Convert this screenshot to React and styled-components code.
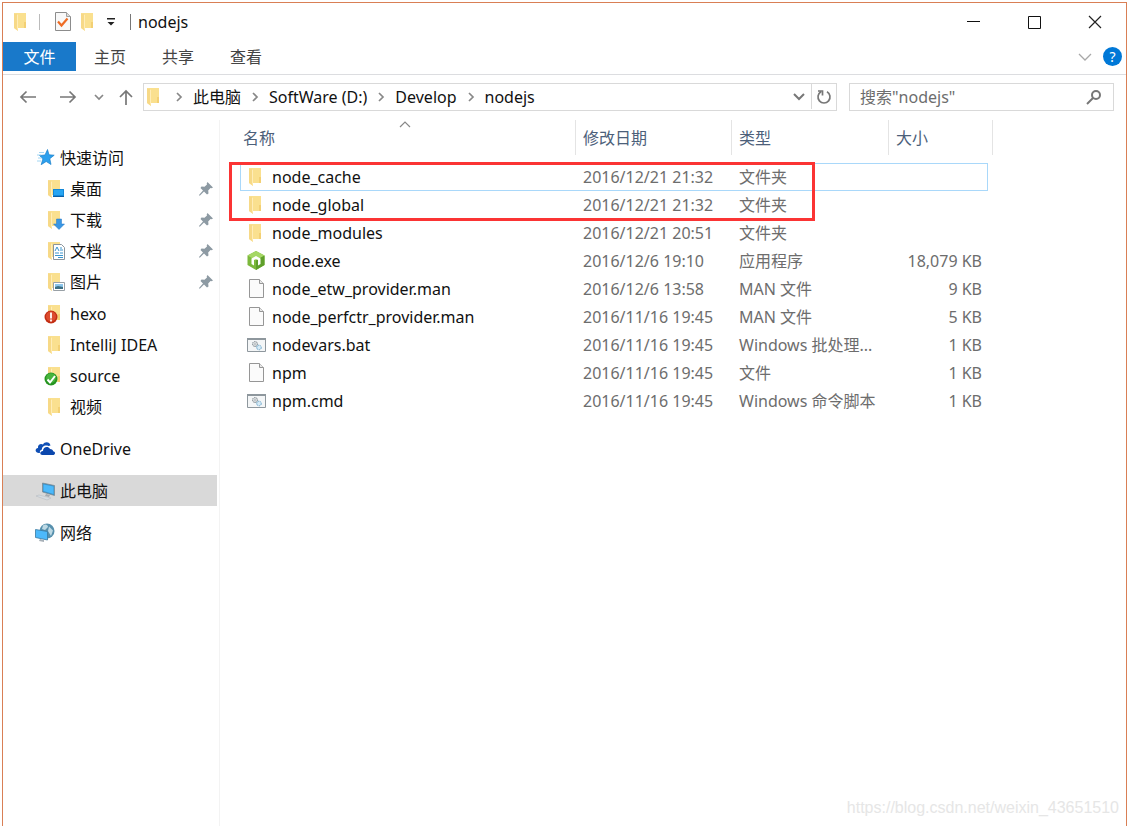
import React from 'react';
import styled, { createGlobalStyle } from 'styled-components';

const pinned = [
  { name: '桌面', icon: 'desktop' },
  { name: '下载', icon: 'download' },
  { name: '文档', icon: 'document' },
  { name: '图片', icon: 'picture' },
];

const folders = [
  { name: 'hexo', icon: 'error' },
  { name: 'IntelliJ IDEA', icon: 'folder' },
  { name: 'source', icon: 'synced' },
  { name: '视频', icon: 'folder' },
];

const path = ['此电脑', 'SoftWare (D:)', 'Develop', 'nodejs'];

const files = [
  { name: 'node_cache', icon: 'folder', date: '2016/12/21 21:32', type: '文件夹', size: '', focused: true },
  { name: 'node_global', icon: 'folder', date: '2016/12/21 21:32', type: '文件夹', size: '' },
  { name: 'node_modules', icon: 'folder', date: '2016/12/21 20:51', type: '文件夹', size: '' },
  { name: 'node.exe', icon: 'node', date: '2016/12/6 19:10', type: '应用程序', size: '18,079 KB' },
  { name: 'node_etw_provider.man', icon: 'file', date: '2016/12/6 13:58', type: 'MAN 文件', size: '9 KB' },
  { name: 'node_perfctr_provider.man', icon: 'file', date: '2016/11/16 19:45', type: 'MAN 文件', size: '5 KB' },
  { name: 'nodevars.bat', icon: 'script', date: '2016/11/16 19:45', type: 'Windows 批处理...', size: '1 KB' },
  { name: 'npm', icon: 'file', date: '2016/11/16 19:45', type: '文件', size: '1 KB' },
  { name: 'npm.cmd', icon: 'script', date: '2016/11/16 19:45', type: 'Windows 命令脚本', size: '1 KB' },
];

const FolderShape = () => (
  <>
    <path d="M3 1h11v15H5z" fill="#fae08f" />
    <path d="M12 10h2v6h-2z" fill="#f3d074" />
    <path d="M2 1l4 2v16l-4-3z" fill="#ffedb8" />
    <path d="M2 1l3 1v14l1 3-4-3z" fill="#f7d987" />
  </>
);

const shapes = {
  folder: <FolderShape />,
  desktop: (
    <>
      <FolderShape />
      <path d="M7 10h11v8H7z" fill="#1388d8" />
      <path d="M8 11h9v5H8z" fill="#27a5f2" />
      <path d="M7 17h11v1H7z" fill="#0b5fa5" />
    </>
  ),
  download: (
    <>
      <FolderShape />
      <path d="M10.500 9h5v5h3L13 19.500l-5.500-5.500h3z" fill="#3a97e4" stroke="#2377c4" strokeWidth=".5" />
    </>
  ),
  document: (
    <>
      <FolderShape />
      <path d="M7.500 3.500h8l3 3v12h-11z" fill="#fff" stroke="#8b959c" />
      <path d="M9 10l2-4 2 4M14 7h2M14 9h3M9 12h4M14 12h3M9 14.500h8M12 16.500h5" fill="none" stroke="#3c96cf" />
    </>
  ),
  picture: (
    <>
      <FolderShape />
      <path d="M7.500 10.500h11v8h-11z" fill="#fff" stroke="#98a0a6" />
      <path d="M9 12h8v3H9z" fill="#8cc6ec" />
      <path d="M9 15l3-1 5 1v2H9z" fill="#3c6f84" />
    </>
  ),
  error: (
    <>
      <FolderShape />
      <circle cx="5" cy="13" r="6.500" fill="#c22d13" />
      <circle cx="5" cy="12.500" r="5" fill="#dc4c2e" />
      <path d="M5 8.500v6M5 15.500v2" stroke="#fff" strokeWidth="1.800" />
    </>
  ),
  synced: (
    <>
      <FolderShape />
      <circle cx="5" cy="13" r="6.500" fill="#259420" />
      <circle cx="5" cy="12" r="4.800" fill="#48b43d" />
      <path d="M1.500 13.500l2.500 3 5-6.500" fill="none" stroke="#fff" strokeWidth="2" />
    </>
  ),
  star: (
    <>
      <path d="M11.500 1.500l1.500 5.300 5.200.4-4.400 3.500 1.200 5.800-4.800-3-5 3.200 1.700-5.900L3.500 7.500l5.500-.5z" fill="#2ba0ee" stroke="#1c7fc9" strokeWidth=".7" />
      <path d="M3 4.500h5M1 7h4M2 10h4M1 13h4" stroke="#8ccbf0" strokeWidth=".8" />
    </>
  ),
  cloud: (
    <>
      <path d="M3 14C-1 14-1.500 9.500 2 9 1.500 5.500 5 4 7 5.500c1.500-3.500 7-3 7.500 1l-2 .5C9 5.500 5.500 7.500 6 10.500c-2 .5-2.500 2-2 3.500z" fill="#0f4fb5" />
      <path d="M6.500 16c-3 0-3-4 .5-4 0-4 5-5.500 7-2 2 0 3 1 3 2.200 3 .3 2.500 3.800-.2 3.800z" fill="#0b47ad" />
    </>
  ),
  computer: (
    <>
      <path d="M6.500 2l12 2.500v10L6.500 11z" fill="#3d92c9" stroke="#78858d" strokeWidth=".7" />
      <path d="M7.500 3.500l10 2v7.500l-10-3z" fill="#4cb9fb" />
      <path d="M10 13l4 1-1 2-4-1z" fill="#a4abb0" />
      <path d="M0 15l3-1 12 3-4 2z" fill="#d7dde2" stroke="#b0b7bd" strokeWidth=".5" />
    </>
  ),
  network: (
    <>
      <circle cx="11" cy="8" r="7.500" fill="#5790ad" />
      <path d="M7 2.500c2-2 5-1 5 1.500L9 7 6 6zM13 3.500l4 4-2 5.500-3-5z" fill="#bdd9e4" />
      <path d="M-.5 6.500l12 2v8.500l-12-2.500z" fill="#4cb9fb" stroke="#38789f" strokeWidth=".8" />
      <path d="M4 16l4 1v2L3 18z" fill="#a7b0b7" />
    </>
  ),
  node: (
    <>
      <path d="M9 0l8.500 4.500v9.500L9 19 .5 14V4.500z" fill="#7cb83c" />
      <path d="M9 0l8.500 4.500L9 9.500.5 4.500z" fill="#a5d765" />
      <path d="M9 9.500l8.500-5v9.500L9 19z" fill="#5f9f2b" />
      <path d="M4.500 13V7.500L9 5l4.500 2.500V13L11 14.500V9L9 8 7 9v5.500z" fill="#fff" />
    </>
  ),
  file: (
    <>
      <path d="M2.500 .5h10l4 4v14h-14z" fill="#fbfbfb" stroke="#969696" />
      <path d="M12.500 .5v4h4" fill="#e8e8e8" stroke="#969696" />
    </>
  ),
  script: (
    <>
      <path d="M.5 3.500h18v13H.5z" fill="#f4f6f7" stroke="#8e979d" />
      <path d="M0 3h19v2H0z" fill="#8e979d" />
      <circle cx="8" cy="9" r="2.500" fill="#e2e6e8" stroke="#7f888e" strokeDasharray="1.500 .6" />
      <circle cx="8" cy="9" r="1" fill="#fff" stroke="#7f888e" strokeWidth=".5" />
      <circle cx="12" cy="12.500" r="2.300" fill="#d5eaf6" stroke="#6ba6ca" strokeDasharray="1.500 .6" />
    </>
  ),
  checked: (
    <>
      <path d="M2.500 .5h11l4 4v14h-15z" fill="#f8f8f8" stroke="#8c8c8c" />
      <path d="M13.500 .5v4h4" fill="#ddd" stroke="#a0a0a0" />
      <path d="M5 9.500l3.500 4 6-7" fill="none" stroke="#ee6b24" strokeWidth="2.200" />
    </>
  ),
};

const Icon = ({ name }) => (
  <IconBox viewBox="0 0 20 20" aria-hidden="true">{shapes[name]}</IconBox>
);

// Line drawings share one stroke style
const Line = ({ d, w = 16, h = 16, color = '#777', weight = 1.7 }) => (
  <svg width={w} height={h} viewBox={`0 0 ${w} ${h}`} fill="none" stroke={color} strokeWidth={weight} aria-hidden="true">
    <path d={d} />
  </svg>
);

const Pin = () => (
  <svg width="14" height="14" viewBox="0 0 14 14" aria-hidden="true">
    <path d="M8.500 0L14 5.500l-1.500.8-1-.3-2.300 2.500.3 3-1.500 1L5 9.500 1 13.500H0V13l4-4.500L1.500 6l1-1.500 3 .3L8 2.500l-.3-1z" fill="#8d9aa3" />
  </svg>
);

function TitleBar() {
  return (
    <Title>
      <Icon name="folder" />
      <Divider />
      <QuickButton aria-label="属性"><Icon name="checked" /></QuickButton>
      <QuickButton aria-label="新建文件夹"><Icon name="folder" /></QuickButton>
      <MenuButton aria-label="自定义快速访问工具栏">
        <svg width="10" height="8" viewBox="0 0 10 8"><path d="M1 0h8v1.500H1zM1.500 4h7L5 7.500z" fill="#222" /></svg>
      </MenuButton>
      <Divider $dark />
      <TitleText>nodejs</TitleText>
      <WindowButton aria-label="最小化"><Line d="M1 7.500h13" color="#111" weight={1} /></WindowButton>
      <WindowButton aria-label="最大化"><Line d="M1.500 2.500h12v12h-12z" color="#111" weight={1} /></WindowButton>
      <WindowButton aria-label="关闭"><Line d="M1 2l12 12M13 2L1 14" color="#222" weight={1.2} /></WindowButton>
    </Title>
  );
}

function Ribbon() {
  return (
    <RibbonBar>
      <FileTab>文件</FileTab>
      <Tab>主页</Tab>
      <Tab>共享</Tab>
      <Tab>查看</Tab>
      <RibbonEnd>
        <PlainButton aria-label="展开功能区"><Line d="M2 5l6 6 6-6" color="#a8a8a8" weight={1.3} /></PlainButton>
        <Help aria-label="帮助">?</Help>
      </RibbonEnd>
    </RibbonBar>
  );
}

function AddressBar() {
  return (
    <Navigation>
      <NavButton $width={36} aria-label="返回"><Line d="M17 8H2M7.500 2.500L2 8l5.500 5.500" w={18} /></NavButton>
      <NavButton $width={44} aria-label="前进"><Line d="M1 8h15M10.500 2.500L16 8l-5.500 5.500" w={18} /></NavButton>
      <NavButton $width={18} aria-label="最近浏览的位置"><Line d="M1 3l4 4 4-4" w={10} h={10} color="#888" /></NavButton>
      <NavButton $width={35} aria-label="向上"><Line d="M8 16V2M2 8l6-6 6 6" /></NavButton>
      <Address>
        <Icon name="folder" />
        {path.map((part) => (
          <React.Fragment key={part}>
            <Arrow><Line d="M2 1l4 4-4 4" w={8} h={10} color="#888" /></Arrow>
            <Crumb href="#">{part}</Crumb>
          </React.Fragment>
        ))}
        <AddressEnd>
          <NavButton $width={24} aria-label="以前的位置"><Line d="M1 3l5 5 5-5" w={12} h={12} weight={2} /></NavButton>
          <Refresh aria-label="刷新">
            <Line d="M11 2.800a6 6 0 1 1-6 0M2 2h4.500v4.500" />
          </Refresh>
        </AddressEnd>
      </Address>
      <Search>
        <SearchInput type="search" aria-label="搜索" placeholder={'搜索"nodejs"'} />
        <PlainButton aria-label="开始搜索">
          <svg width="16" height="16" viewBox="0 0 16 16" fill="none" stroke="#777" strokeWidth="2" aria-hidden="true">
            <circle cx="10" cy="6" r="4" />
            <path d="M7 9l-6 6" />
          </svg>
        </PlainButton>
      </Search>
    </Navigation>
  );
}

function Sidebar() {
  return (
    <Side>
      <Group>
        <Place href="#"><Icon name="star" />快速访问</Place>
        {pinned.map((item) => (
          <Place href="#" key={item.name} $nested>
            <Icon name={item.icon} />
            <PlaceName>{item.name}</PlaceName>
            <Pin />
          </Place>
        ))}
        <Subgroup>
          {folders.map((item) => (
            <Place href="#" key={item.name} $nested><Icon name={item.icon} />{item.name}</Place>
          ))}
        </Subgroup>
      </Group>
      <Place href="#"><Icon name="cloud" />OneDrive</Place>
      <Place href="#" $active><Icon name="computer" />此电脑</Place>
      <Place href="#"><Icon name="network" />网络</Place>
    </Side>
  );
}

function FileList() {
  return (
    <ListArea>
      <Table>
        <colgroup>
          <Col $width={341} />
          <Col $width={156} />
          <Col $width={157} />
          <Col $width={104} />
        </colgroup>
        <thead>
          <tr>
            <Th aria-sort="ascending">
              <HeadButton $first>名称<SortMark><Line d="M1 6l5-5 5 5" w={12} h={7} color="#888" weight={1.2} /></SortMark></HeadButton>
            </Th>
            <Th><HeadButton>修改日期</HeadButton></Th>
            <Th><HeadButton>类型</HeadButton></Th>
            <Th><HeadButton>大小</HeadButton></Th>
          </tr>
        </thead>
        <tbody>
          {files.map((file) => (
            <Row key={file.name} $focused={file.focused}>
              <NameCell><FileName><Icon name={file.icon} />{file.name}</FileName></NameCell>
              <Cell>{file.date}</Cell>
              <Cell>{file.type}</Cell>
              <SizeCell>{file.size}</SizeCell>
            </Row>
          ))}
        </tbody>
      </Table>
      <Highlight />
    </ListArea>
  );
}

function App() {
  return (
    <>
      <GlobalStyle />
      <Page>
        <Window>
          <TitleBar />
          <Ribbon />
          <AddressBar />
          <Content>
            <Sidebar />
            <FileList />
          </Content>
          <Watermark>https://blog.csdn.net/weixin_43651510</Watermark>
        </Window>
      </Page>
    </>
  );
}

export default App;

const GlobalStyle = createGlobalStyle`
  * {
    box-sizing: border-box;
  }
  body {
    margin: 0;
    background: #fff;
    color: #111;
    font: 16px/24px "Noto Sans", "Noto Sans CJK SC", sans-serif;
  }
  button, input {
    margin: 0;
    padding: 0;
    border: 0;
    background: none;
    color: inherit;
    font: inherit;
  }
  a {
    color: inherit;
    text-decoration: none;
  }
  svg {
    display: block;
    flex: none;
  }
`;

const Page = styled.div`
  display: flex;
  min-height: 100vh;
  padding: 2px 1px 0 2px;
`;

const Window = styled.div`
  position: relative;
  flex: 1;
  display: flex;
  flex-direction: column;
  border: 1px solid #d97f55;
  border-bottom: 0;
`;

const IconBox = styled.svg`
  width: 20px;
  height: 20px;
  overflow: visible;
`;

const Title = styled.header`
  display: flex;
  align-items: center;
  height: 39px;
  padding: 0 0 2px 9px;
`;

const Divider = styled.span`
  width: 1px;
  height: 16px;
  margin: 0 7px;
  background: ${({ $dark }) => ($dark ? '#777' : '#bbb')};
`;

const PlainButton = styled.button`
  display: flex;
  align-items: center;
  justify-content: center;
`;

const QuickButton = styled(PlainButton)`
  width: 26px;
  padding-left: 6px;
`;

const MenuButton = styled(PlainButton)`
  width: 24px;
`;

const TitleText = styled.span`
  flex: 1;
`;

const WindowButton = styled(PlainButton)`
  width: 61px;
  height: 100%;
`;

const RibbonBar = styled.div`
  display: flex;
  height: 33px;
  padding-bottom: 3px;
  border-bottom: 1px solid #dcdde0;
`;

const Tab = styled.button`
  width: 68px;
  color: #444;
`;

const FileTab = styled(Tab)`
  width: 73px;
  background: #1979ca;
  color: #fff;
`;

const RibbonEnd = styled.div`
  display: flex;
  align-items: center;
  gap: 10px;
  margin-left: auto;
  padding-right: 4px;
`;

const Help = styled.button`
  width: 19px;
  height: 19px;
  border-radius: 50%;
  background: #0078d7;
  color: #fff;
  font-size: 14px;
  line-height: 19px;
`;

const Navigation = styled.div`
  display: flex;
  padding: 8px 12px 9px 7px;
`;

const NavButton = styled(PlainButton)`
  width: ${({ $width }) => $width}px;
`;

const Address = styled.nav`
  flex: 1;
  display: flex;
  align-items: center;
  height: 28px;
  padding: 0 0 1px 1px;
  border: 1px solid #d9d9d9;
`;

const Arrow = styled.span`
  display: flex;
  justify-content: center;
  width: 28px;
`;

const Crumb = styled.a`
  white-space: nowrap;
`;

const AddressEnd = styled.div`
  display: flex;
  align-self: stretch;
  margin-left: auto;
`;

const Refresh = styled(PlainButton)`
  width: 25px;
  border-left: 1px solid #d9d9d9;
`;

const Search = styled.div`
  display: flex;
  width: 24%;
  height: 28px;
  margin-left: 12px;
  padding: 0 11px 0 10px;
  border: 1px solid #d9d9d9;
`;

const SearchInput = styled.input`
  flex: 1;
  min-width: 0;
  outline: 0;
  &::placeholder {
    color: #6d6d6d;
    opacity: 1;
  }
`;

const Content = styled.div`
  flex: 1;
  display: flex;
`;

const Side = styled.nav`
  display: flex;
  flex-direction: column;
  gap: 11px;
  width: 217px;
  padding: 22px 2px 0 0;
  border-right: 1px solid #f3f3f3;
`;

const Group = styled.div`
  display: flex;
  flex-direction: column;
`;

const Subgroup = styled(Group)`
  padding-top: 1px;
`;

const Place = styled.a`
  display: flex;
  align-items: center;
  gap: 4px;
  height: 31px;
  padding: 0 4px 0 ${({ $nested }) => ($nested ? 43 : 33)}px;
  background: ${({ $active }) => ($active ? '#d9d9d9' : 'none')};
`;

const PlaceName = styled.span`
  flex: 1;
`;

const ListArea = styled.main`
  position: relative;
  flex: 1;
  padding-left: 15px;
`;

const Table = styled.table`
  table-layout: fixed;
  width: 758px;
  border-collapse: collapse;
`;

const Col = styled.col`
  width: ${({ $width }) => $width}px;
`;

const Th = styled.th`
  padding: 0 0 8px;
  font-weight: 400;
`;

const HeadButton = styled.button`
  position: relative;
  display: block;
  width: 100%;
  height: 35px;
  padding-left: ${({ $first }) => ($first ? 8 : 7)}px;
  border-right: 1px solid #e4e4e4;
  color: #4c607a;
  text-align: left;
`;

const SortMark = styled.span`
  position: absolute;
  top: 1px;
  left: 50%;
  transform: translateX(-50%);
`;

/* the focus frame is drawn over the cells, inset from both table edges */
const Row = styled.tr`
  position: relative;
  height: 28px;
  &::after {
    content: "";
    display: ${({ $focused }) => ($focused ? 'block' : 'none')};
    position: absolute;
    inset: 0 5px;
    border: 1px solid #a9d8fa;
  }
`;

const Cell = styled.td`
  padding: 0 0 0 7px;
  color: #6d6d6d;
  white-space: nowrap;
`;

const NameCell = styled(Cell)`
  padding-left: 12px;
  color: #111;
`;

const SizeCell = styled(Cell)`
  padding-right: 11px;
  text-align: right;
`;

const FileName = styled.span`
  display: flex;
  align-items: center;
  gap: 5px;
`;

const Highlight = styled.div`
  position: absolute;
  top: 42px;
  left: 9px;
  width: 586px;
  height: 59px;
  border: 3px solid #fb3434;
  pointer-events: none;
`;

const Watermark = styled.span`
  position: absolute;
  right: 7px;
  bottom: 6px;
  color: #e6e6e6;
  font-family: "Liberation Sans", sans-serif;
`;
